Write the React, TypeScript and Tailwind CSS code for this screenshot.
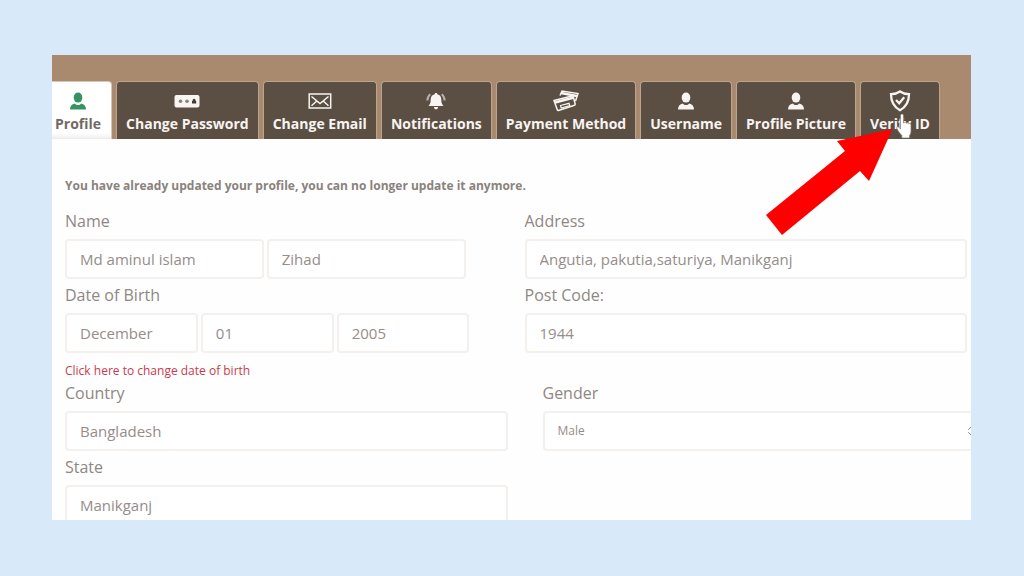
import type { ReactNode } from "react";
import { ChevronsUpDown } from "lucide-react";

type Tab = {
  label: string;
  icon: ReactNode;
};

function PersonIcon() {
  return (
    <svg viewBox="0 0 18 18" className="h-[18px] w-[18px]" fill="currentColor" aria-hidden="true">
      <ellipse cx="9" cy="5.6" rx="4.300" ry="5" />
      <path d="M1 17.500c0-3.600 1.600-5.200 5-6 .6 1 1.600 1.500 3 1.500s2.400-.5 3-1.500c3.400.8 5 2.400 5 6z" />
    </svg>
  );
}

function PasswordIcon() {
  return (
    <svg viewBox="0 0 26 18" className="h-[18px] w-[26px]" aria-hidden="true">
      <rect x="0.500" y="3" width="25" height="12.500" rx="2" fill="currentColor" />
      <circle cx="6.500" cy="9.300" r="1.800" fill="#8b8178" />
      <circle cx="13" cy="9.300" r="1.800" fill="#8b8178" />
      <path d="M18 9h.6V8.300a1.500 1.500 0 0 1 3 0V9h.6v2.500H18z" fill="#463b32" />
    </svg>
  );
}

function MailIcon() {
  return (
    <svg
      viewBox="0 0 24 18"
      className="h-[18px] w-6"
      fill="none"
      stroke="currentColor"
      strokeWidth="1.500"
      aria-hidden="true"
    >
      <rect x="1.200" y="2" width="21.500" height="14" />
      <path d="M3.500 4.500 12 11.500l8.500-7M3.500 13.800l5.300-4.800M20.500 13.800l-5.300-4.800" />
    </svg>
  );
}

function BellIcon() {
  return (
    <svg viewBox="0 0 20 18" className="h-[18px] w-5" aria-hidden="true">
      <path
        d="M10 1c.8 0 1.300.5 1.300 1.200 2.700.6 4 2.500 4 5.300 0 3 .6 4.600 2.100 6.500H2.600c1.500-1.900 2.100-3.500 2.100-6.500 0-2.800 1.300-4.700 4-5.300C8.700 1.500 9.200 1 10 1zM8 15h4c0 1.400-.8 2.300-2 2.300S8 16.400 8 15z"
        fill="currentColor"
      />
      <path
        d="M4.300 2.300C2.600 3.600 1.500 5.500 1.300 8.500M15.700 2.300c1.700 1.300 2.800 3.200 3 6.200"
        fill="none"
        stroke="currentColor"
        strokeWidth="2"
        opacity="0.600"
      />
    </svg>
  );
}

function CardsIcon() {
  return (
    <svg viewBox="0 0 28 24" className="-my-[3px] h-6 w-7" fill="none" stroke="currentColor" aria-hidden="true">
      <path d="M8 6.500 10 2l16 2.500-2.500 7.500" strokeWidth="1.500" />
      <path d="m9 4 16 3" strokeWidth="2.600" />
      <path
        d="m2 11.500 18-4.500a1 1 0 0 1 1.200.7l2 7.300a1 1 0 0 1-.7 1.200L6.500 21.500a1 1 0 0 1-1.200-.7z"
        strokeWidth="1.500"
      />
      <path d="m3 13.500 19-5" strokeWidth="2.800" />
      <path d="m8.500 16.500 8.500-2.200.8 2.400-8.600 2.300z" strokeWidth="1.200" />
    </svg>
  );
}

function ShieldIcon() {
  return (
    <svg
      viewBox="0 0 24 24"
      className="-my-[3px] h-6 w-6"
      fill="none"
      stroke="currentColor"
      strokeWidth="2.300"
      aria-hidden="true"
    >
      <path d="M12 2.500c2.600 1.900 5.500 2.600 9 2.700 0 7.500-2.500 12.500-9 16C5.500 17.700 3 12.700 3 5.200c3.500-.1 6.400-.8 9-2.700z" />
      <path d="m8 11 3.200 3.200 5-6" />
    </svg>
  );
}

const tabs: Tab[] = [
  { label: "Change Password", icon: <PasswordIcon /> },
  { label: "Change Email", icon: <MailIcon /> },
  { label: "Notifications", icon: <BellIcon /> },
  { label: "Payment Method", icon: <CardsIcon /> },
  { label: "Username", icon: <PersonIcon /> },
  { label: "Profile Picture", icon: <PersonIcon /> },
];

const tabClass =
  "flex h-full flex-col items-center gap-1 whitespace-nowrap rounded-t border-x border-t border-[#bda48e] bg-[#5b4e43] px-[9px] pt-2.5 text-sm leading-5 font-bold text-[#f7f4f1]";

const fieldClass =
  "h-10 w-full min-w-0 rounded border-2 border-[#f3f0ee] bg-white px-[13px] text-[#958d89] outline-none";

const labelClass = "mt-1 mb-1.5 block h-6 text-base leading-6";

function Field({ id, label, value }: { id: string; label: string; value: string }) {
  return (
    <div>
      <label htmlFor={id} className={labelClass}>
        {label}
      </label>
      <input id={id} className={fieldClass} defaultValue={value} readOnly />
    </div>
  );
}

function Pointer() {
  return (
    <>
      <svg
        viewBox="0 0 16 26"
        className="absolute top-8 left-9 z-20 h-[26px] w-4"
        fill="#ffffff"
        stroke="#80756c"
        strokeWidth="0.700"
        aria-hidden="true"
      >
        <path d="M4.500 2.500c0-2 3-2 3 0V10c.5-1 2.500-.9 2.700.3.600-.9 2.300-.6 2.500.5.800-.7 2.300-.3 2.300 1.200v6c0 2.300-.8 3.600-1.500 4.700V25H5.800v-2.500C4 20.500 1.500 17.500.8 15.300c-.4-1.500 1.300-2.200 2.200-1l1.500 1.800z" />
      </svg>
      <svg
        viewBox="0 0 127 106"
        className="absolute top-12 -left-[94px] z-10 h-[106px] w-[127px]"
        fill="#ff0000"
        aria-hidden="true"
      >
        <path d="M126.500 0 71 12l8 10L0 86l16 20 78-64 9 10z" />
      </svg>
    </>
  );
}

export default function App() {
  return (
    <main className="h-screen bg-[#d8e9fa] pt-[55px] pr-[53px] pb-14 pl-[52px] font-['Open_Sans','Noto_Sans',sans-serif]">
      <div className="flex h-full flex-col overflow-hidden bg-[#fefefe]">
        <nav className="shrink-0 bg-[#a98a6f] pt-[26px]" aria-label="Account settings">
          <ul className="flex h-[58px] gap-1">
            <li>
              <button
                type="button"
                aria-current="page"
                className="flex h-full flex-col items-center gap-1 rounded-tr border-t border-r border-[#d5c6b8] bg-linear-to-b from-white from-90% to-[#ececec] pt-2.5 pr-2.5 pl-[3px] text-sm leading-5 font-bold text-[#706a66]"
              >
                <span className="text-[#369361]">
                  <PersonIcon />
                </span>
                Profile
              </button>
            </li>
            {tabs.map((tab) => (
              <li key={tab.label}>
                <button type="button" className={tabClass}>
                  {tab.icon}
                  {tab.label}
                </button>
              </li>
            ))}
            <li className="relative">
              <button type="button" className={tabClass}>
                <ShieldIcon />
                Verify ID
              </button>
              <Pointer />
            </li>
          </ul>
        </nav>

        <form className="pt-9 text-[15px] text-[#8f8783]">
          <p className="mb-2 pl-[13px] text-xs leading-[22px] font-bold text-[#8a827d]">
            You have already updated your profile, you can no longer update it anymore.
          </p>

          <div className="grid grid-cols-2">
            <div className="pr-[46px] pl-[13px]">
              <label htmlFor="first-name" className={labelClass}>
                Name
              </label>
              <div className="flex gap-[3px]">
                <input id="first-name" className={fieldClass} defaultValue="Md aminul islam" readOnly />
                <input aria-label="Last name" className={fieldClass} defaultValue="Zihad" readOnly />
              </div>
            </div>
            <div className="pr-1 pl-[13px]">
              <Field id="address" label="Address" value="Angutia, pakutia,saturiya, Manikganj" />
            </div>
            <div className="pr-[42px] pl-[13px]">
              <label htmlFor="birth-month" className={labelClass}>
                Date of Birth
              </label>
              <div className="flex gap-[3px]">
                <input id="birth-month" className={fieldClass} defaultValue="December" readOnly />
                <input aria-label="Day" className={fieldClass} defaultValue="01" readOnly />
                <input aria-label="Year" className={fieldClass} defaultValue="2005" readOnly />
              </div>
            </div>
            <div className="pr-1 pl-[13px]">
              <Field id="post-code" label="Post Code:" value="1944" />
            </div>
          </div>

          <a href="#birth-month" className="mt-2 -mb-1 ml-[13px] block w-fit text-xs leading-5 text-[#c63c4e]">
            Click here to change date of birth
          </a>

          <div className="grid grid-cols-2">
            <div className="pr-1 pl-[13px]">
              <Field id="country" label="Country" value="Bangladesh" />
              <Field id="state" label="State" value="Manikganj" />
            </div>
            <div className="-mr-[14px] pl-[31px]">
              <label htmlFor="gender" className={labelClass}>
                Gender
              </label>
              <div className="relative">
                <select id="gender" className={`${fieldClass} appearance-none text-xs`} defaultValue="Male">
                  <option>Male</option>
                  <option>Female</option>
                </select>
                <ChevronsUpDown className="pointer-events-none absolute top-3.5 right-2 h-3 w-3" />
              </div>
            </div>
          </div>
        </form>
      </div>
    </main>
  );
}
